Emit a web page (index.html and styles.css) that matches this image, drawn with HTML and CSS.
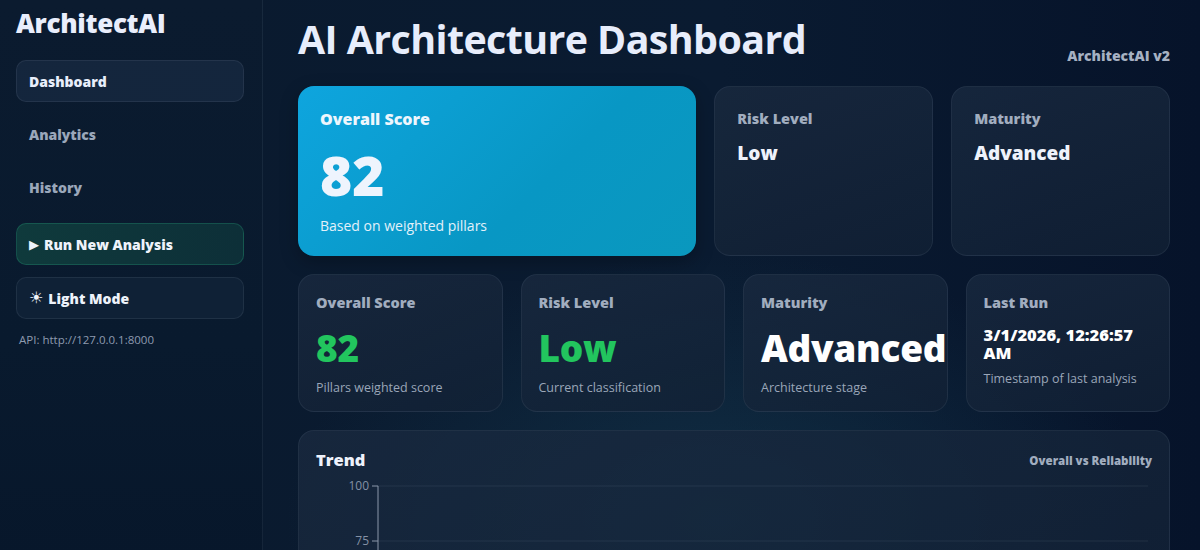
FILE: index.html
```html
<!DOCTYPE html>
<html lang="en">
<head>
<meta charset="utf-8">
<title>ArchitectAI</title>
<link rel="stylesheet" href="styles.css">
</head>
<body>
<div class="app">
  <aside class="sidebar">
    <div class="brand">ArchitectAI</div>
    <nav class="nav">
      <a class="nav-item active">Dashboard</a>
      <a class="nav-item">Analytics</a>
      <a class="nav-item">History</a>
    </nav>
    <button class="btn btn-run"><span class="btn-icon">&#9654;</span> Run New Analysis</button>
    <button class="btn btn-mode"><span class="btn-icon sun">&#9728;</span> Light Mode</button>
    <div class="api">API: http://127.0.0.1:8000</div>
  </aside>

  <main class="main">
    <header class="topbar">
      <h1>AI Architecture Dashboard</h1>
      <span class="version">ArchitectAI v2</span>
    </header>

    <section class="hero-row">
      <div class="card hero">
        <div class="hero-label">Overall Score</div>
        <div class="hero-value">82</div>
        <div class="hero-sub">Based on weighted pillars</div>
      </div>
      <div class="card summary">
        <div class="label">Risk Level</div>
        <div class="summary-value">Low</div>
      </div>
      <div class="card summary">
        <div class="label">Maturity</div>
        <div class="summary-value">Advanced</div>
      </div>
    </section>

    <section class="kpi-row">
      <div class="card kpi">
        <div class="label">Overall Score</div>
        <div class="kpi-value good">82</div>
        <div class="kpi-sub">Pillars weighted score</div>
      </div>
      <div class="card kpi">
        <div class="label">Risk Level</div>
        <div class="kpi-value good">Low</div>
        <div class="kpi-sub">Current classification</div>
      </div>
      <div class="card kpi">
        <div class="label">Maturity</div>
        <div class="kpi-value">Advanced</div>
        <div class="kpi-sub">Architecture stage</div>
      </div>
      <div class="card kpi">
        <div class="label">Last Run</div>
        <div class="kpi-time">3/1/2026, 12:26:57 AM</div>
        <div class="kpi-sub">Timestamp of last analysis</div>
      </div>
    </section>

    <section class="card trend">
      <div class="trend-head">
        <h2>Trend</h2>
        <span class="trend-note">Overall vs Reliability</span>
      </div>
      <svg class="chart" viewBox="0 0 836 240" preserveAspectRatio="none">
        <g class="grid">
          <line x1="62" y1="10" x2="832" y2="10"/>
          <line x1="62" y1="65" x2="832" y2="65"/>
          <line x1="62" y1="120" x2="832" y2="120"/>
          <line x1="62" y1="175" x2="832" y2="175"/>
        </g>
        <g class="axis">
          <line x1="62" y1="10" x2="62" y2="240"/>
          <line x1="56" y1="10" x2="62" y2="10"/>
          <line x1="56" y1="65" x2="62" y2="65"/>
          <line x1="56" y1="120" x2="62" y2="120"/>
          <line x1="56" y1="175" x2="62" y2="175"/>
        </g>
        <g class="ticks">
          <text x="53" y="14">100</text>
          <text x="53" y="69">75</text>
          <text x="53" y="124">50</text>
          <text x="53" y="179">25</text>
        </g>
      </svg>
    </section>
  </main>
</div>
</body>
</html>
```

FILE: styles.css
```css
* {
  box-sizing: border-box;
}

html, body {
  margin: 0;
  height: 100%;
}

body {
  font-family: "Open Sans", "Noto Sans", "DejaVu Sans", sans-serif;
  color: #e8eefb;
  background: #08172b;
  overflow: hidden;
}

.app {
  display: flex;
  min-height: 100vh;
  background:
    radial-gradient(ellipse 620px 380px at 720px 520px, rgba(22, 62, 84, 0.55), rgba(22, 62, 84, 0) 70%),
    linear-gradient(90deg, #0a1a2e 0%, #0a1b31 60%, #06132a 100%);
}

/* ---------- sidebar ---------- */
.sidebar {
  width: 263px;
  flex: 0 0 263px;
  padding: 6px 18px 16px 16px;
  border-right: 1px solid rgba(148, 163, 184, 0.1);
  background: linear-gradient(180deg, #0b1b2f 0%, #091a2e 50%, #061529 100%);
  display: flex;
  flex-direction: column;
}

.brand {
  font-size: 26px;
  font-weight: 800;
  letter-spacing: -0.3px;
  color: #e9eefc;
  line-height: 34px;
  margin-bottom: 20px;
}

.nav {
  display: flex;
  flex-direction: column;
  gap: 11px;
}

.nav-item {
  display: flex;
  align-items: center;
  height: 42px;
  padding: 0 12px;
  border-radius: 10px;
  border: 1px solid transparent;
  font-size: 14px;
  font-weight: 800;
  color: #9aa7ba;
}

.nav-item.active {
  color: #e8eefb;
  background: rgba(30, 48, 72, 0.55);
  border-color: rgba(148, 163, 184, 0.12);
}

.btn {
  display: flex;
  align-items: center;
  gap: 5px;
  height: 42px;
  padding: 0 12px;
  border-radius: 10px;
  font-family: inherit;
  font-size: 14px;
  font-weight: 800;
  color: #eef3fb;
  text-align: left;
  cursor: pointer;
}

.btn-icon {
  font-family: "DejaVu Sans", sans-serif;
  font-size: 13px;
  line-height: 1;
}

.btn-icon.sun {
  font-size: 16px;
  font-weight: 700;
}

.btn-run {
  margin-top: 15px;
  background: linear-gradient(90deg, #0f3a3c 0%, #0d2f38 100%);
  border: 1px solid rgba(52, 211, 153, 0.2);
}

.btn-mode {
  margin-top: 12px;
  background: #0f2136;
  border: 1px solid rgba(148, 163, 184, 0.12);
}

.api {
  margin-top: 13px;
  padding-left: 3px;
  font-size: 11.5px;
  color: #8e9bb0;
}

/* ---------- main ---------- */
.main {
  flex: 1;
  padding: 12px 30px 0 35px;
  display: flex;
  flex-direction: column;
}

.topbar {
  display: flex;
  justify-content: space-between;
  align-items: flex-start;
  height: 74px;
}

.topbar h1 {
  margin: 0;
  font-size: 39.4px;
  font-weight: 700;
  letter-spacing: -0.6px;
  line-height: 54px;
  color: #e7edfb;
}

.version {
  margin-top: 34px;
  font-size: 14px;
  font-weight: 800;
  color: #a6b1c2;
}

.card {
  border-radius: 16px;
  background: linear-gradient(160deg, rgba(26, 42, 64, 0.78), rgba(18, 33, 53, 0.78));
  border: 1px solid rgba(148, 163, 184, 0.1);
}

.label {
  font-size: 14.5px;
  font-weight: 800;
  color: #a1adbf;
}

/* hero row */
.hero-row {
  display: grid;
  grid-template-columns: 1.82fr 1fr 1fr;
  gap: 18px;
  height: 170px;
}

.hero {
  padding: 22px 22px 0;
  background: linear-gradient(135deg, #0ea5de 0%, #0897c4 60%, #0a98be 100%);
  border: none;
  box-shadow: 0 6px 18px rgba(0, 0, 0, 0.25);
}

.hero-label {
  font-size: 16px;
  font-weight: 800;
  color: #eef6fd;
  line-height: 22px;
}

.hero-value {
  margin-top: 14px;
  font-size: 55px;
  font-weight: 800;
  line-height: 62px;
  color: #eef4fd;
}

.hero-sub {
  margin-top: 10px;
  font-size: 14px;
  line-height: 19px;
  color: #e3f1fa;
}

.summary {
  padding: 22px 22px;
}

.summary .label {
  line-height: 20px;
}

.summary-value {
  margin-top: 11px;
  font-size: 19px;
  font-weight: 800;
  color: #eef2fb;
}

/* kpi row */
.kpi-row {
  display: grid;
  grid-template-columns: repeat(4, 1fr);
  gap: 18px;
  margin-top: 18px;
  height: 138px;
}

.kpi {
  padding: 18px 17px 0;
  display: flex;
  flex-direction: column;
  min-width: 0;
}

.kpi .label {
  line-height: 20px;
}

.kpi-value {
  margin-top: 11px;
  font-size: 37px;
  font-weight: 800;
  line-height: 48px;
  color: #ffffff;
  white-space: nowrap;
  letter-spacing: -0.3px;
}

.kpi-value.good {
  color: #22c55e;
}

.kpi-sub {
  margin-top: 7px;
  font-size: 12.5px;
  color: #9aa6b8;
}

.kpi-time {
  margin-top: 13px;
  font-size: 16.5px;
  font-weight: 800;
  line-height: 18px;
  color: #ffffff;
}

.kpi-time + .kpi-sub {
  margin-top: 8px;
}

/* trend */
.trend {
  margin-top: 18px;
  padding: 18px 17px 0;
  height: 260px;
}

.trend-head {
  display: flex;
  justify-content: space-between;
  align-items: center;
}

.trend-head h2 {
  margin: 0;
  font-size: 16.5px;
  font-weight: 800;
  color: #eef2fb;
  line-height: 22px;
}

.trend-note {
  font-size: 11.5px;
  font-weight: 800;
  color: #a1adbf;
}

.chart {
  display: block;
  width: 100%;
  height: 240px;
  margin-top: 5px;
  overflow: visible;
}

.grid line {
  stroke: rgba(148, 163, 184, 0.12);
  stroke-width: 1;
}

.axis line {
  stroke: #8b97aa;
  stroke-width: 1;
}

.ticks text {
  font-size: 12px;
  fill: #8491a5;
  text-anchor: end;
  font-family: "Open Sans", "Noto Sans", sans-serif;
}
```
